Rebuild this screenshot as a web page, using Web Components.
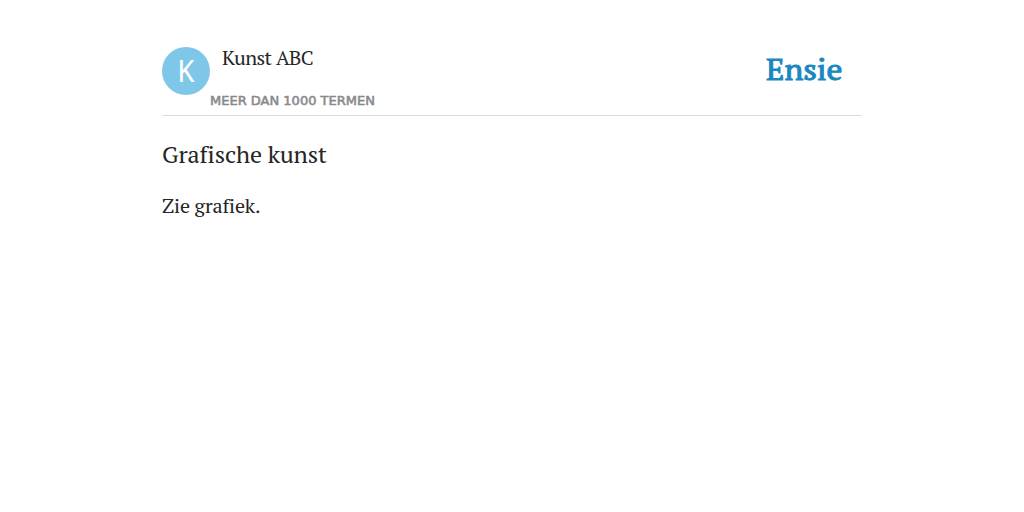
<!DOCTYPE html>
<html lang="nl">
<head>
<meta charset="utf-8">
<title>Grafische kunst</title>
<style>
  body {
    margin: 0;
    background: #fff;
    color: #262626;
    font-family: "PT Serif", "Liberation Serif", serif;
  }
</style>
</head>
<body>
<ensie-page>
  <ensie-header slot="header" initial="K" name="Kunst ABC" terms="Meer dan 1000 termen"></ensie-header>
  <ensie-definition term="Grafische kunst">Zie grafiek.</ensie-definition>
</ensie-page>

<script>
class EnsiePage extends HTMLElement {
  constructor() {
    super();
    this.attachShadow({ mode: 'open' });
    this.shadowRoot.innerHTML = `
      <style>
        :host {
          display: block;
          width: 700px;
          margin: 0 auto;
          padding-top: 47px;
        }
      </style>
      <slot name="header"></slot>
      <slot></slot>
    `;
  }
}

class EnsieAvatar extends HTMLElement {
  constructor() {
    super();
    this.attachShadow({ mode: 'open' });
    this.shadowRoot.innerHTML = `
      <style>
        :host {
          display: flex;
          align-items: center;
          justify-content: center;
          width: 48px;
          height: 48px;
          border-radius: 50%;
          background: #7fc7e9;
          color: #fff;
          font: 400 30px/46px "Noto Sans", "Open Sans", sans-serif;
        }
        span {
          display: block;
          transform: translate(-0.5px, -0.5px) scaleX(0.9);
          -webkit-text-stroke: 0.2px #fff;
        }
      </style>
      <span><slot></slot></span>
    `;
  }
}

class EnsieLogo extends HTMLElement {
  constructor() {
    super();
    this.attachShadow({ mode: 'open' });
    this.shadowRoot.innerHTML = `
      <style>
        :host {
          display: block;
          color: #1c87c0;
        }
        svg {
          display: block;
          overflow: visible;
        }
        text {
          font: 30px "PT Serif", "Liberation Serif", serif;
          fill: currentColor;
          stroke: currentColor;
          stroke-width: 1px;
        }
      </style>
      <svg width="77" height="34">
        <text x="0" y="33.3" textLength="76.5" lengthAdjust="spacingAndGlyphs">Ensie</text>
      </svg>
    `;
  }
}

class EnsieHeader extends HTMLElement {
  constructor() {
    super();
    this.attachShadow({ mode: 'open' });
    this._render();
  }

  _render() {
    const initial = this.getAttribute('initial') || '';
    const name = this.getAttribute('name') || '';
    const terms = this.getAttribute('terms') || '';

    this.shadowRoot.innerHTML = `
      <style>
        :host {
          display: flex;
          box-sizing: border-box;
          height: 69px;
          border-bottom: 1px solid #dadada;
        }
        .author {
          flex: 1;
        }
        .name {
          margin-left: 12px;
          font-size: 20px;
          line-height: 21px;
          letter-spacing: -0.6px;
          word-spacing: 0.8px;
        }
        .terms {
          margin-top: 25px;
          color: #8a8a8d;
          font: 13px/16px "DejaVu Sans", sans-serif;
          -webkit-text-stroke: 0.6px #8a8a8d;
          text-transform: uppercase;
        }
        ensie-logo {
          margin-right: 19px;
        }
      </style>
      <ensie-avatar>${initial}</ensie-avatar>
      <div class="author">
        <div class="name">${name}</div>
        <div class="terms">${terms}</div>
      </div>
      <ensie-logo></ensie-logo>
    `;
  }
}

class EnsieDefinition extends HTMLElement {
  constructor() {
    super();
    this.attachShadow({ mode: 'open' });
    this._render();
  }

  _render() {
    const term = this.getAttribute('term') || '';

    this.shadowRoot.innerHTML = `
      <style>
        :host {
          display: block;
          padding-top: 23px;
        }
        h1 {
          margin: 0 0 21px;
          font-size: 24px;
          font-weight: normal;
          line-height: 31px;
          letter-spacing: -0.12px;
        }
        p {
          margin: 0;
          font-size: 20px;
          line-height: 30px;
          letter-spacing: -0.15px;
        }
      </style>
      <h1>${term}</h1>
      <p><slot></slot></p>
    `;
  }
}

customElements.define('ensie-page', EnsiePage);
customElements.define('ensie-avatar', EnsieAvatar);
customElements.define('ensie-logo', EnsieLogo);
customElements.define('ensie-header', EnsieHeader);
customElements.define('ensie-definition', EnsieDefinition);
</script>
</body>
</html>
